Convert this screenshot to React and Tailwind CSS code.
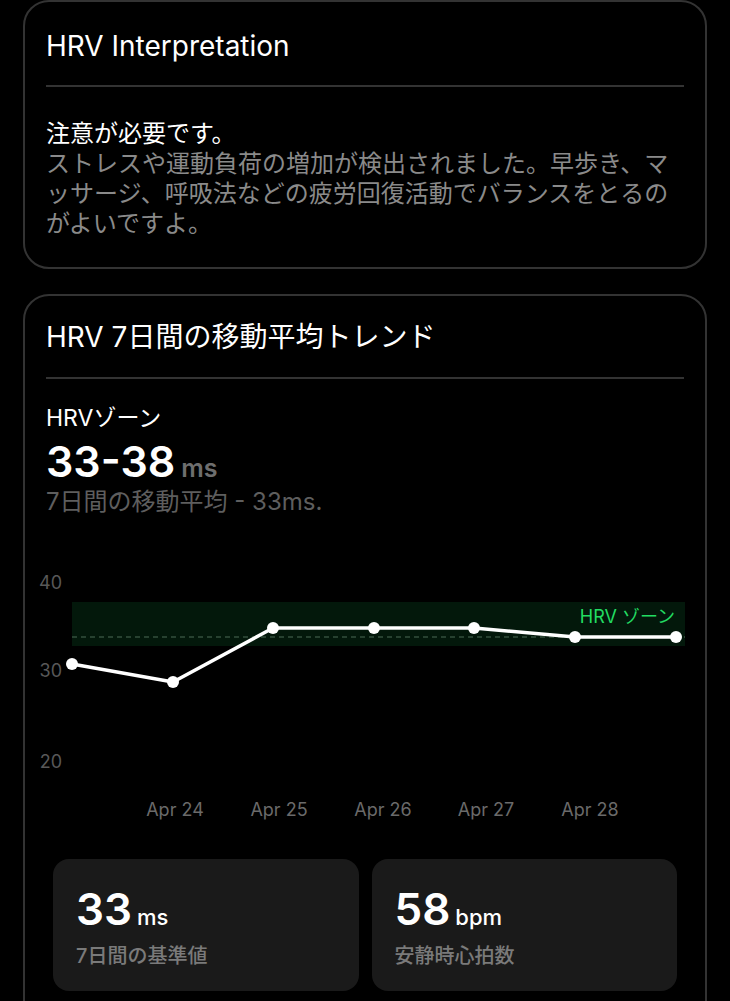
import React from 'react';

const font = { fontFamily: 'Inter, "Noto Sans CJK JP", sans-serif' };

const points = [
    [47, 104],
    [148, 122],
    [248, 68],
    [349, 68],
    [449, 68],
    [550, 77],
    [651, 77],
];

const xLabels = [
    ['Apr 24', 150],
    ['Apr 25', 254],
    ['Apr 26', 358],
    ['Apr 27', 461],
    ['Apr 28', 565],
];

function TrendChart() {
    const line = points.map((p, i) => (i === 0 ? 'M' : 'L') + p[0] + ' ' + p[1]).join(' ');
    return (
        <svg width="680" height="270" viewBox="0 0 680 270" className="block">
            <rect x="47" y="42" width="613" height="44" fill="#03180b" />
            <line x1="47" y1="77" x2="660" y2="77" stroke="#4d6b57" strokeWidth="1" strokeDasharray="5 4" />
            <text x="650" y="63" textAnchor="end" fill="#22dc62" fontSize="18" style={font}>HRV ゾーン</text>
            <text x="37" y="29" textAnchor="end" fill="#585858" fontSize="18" style={font}>40</text>
            <text x="37" y="117" textAnchor="end" fill="#585858" fontSize="18" style={font}>30</text>
            <text x="37" y="208" textAnchor="end" fill="#585858" fontSize="18" style={font}>20</text>
            {xLabels.map(([t, x]) => (
                <text key={t} x={x} y="256" textAnchor="middle" fill="#6a6a6a" fontSize="18" style={font}>{t}</text>
            ))}
            <path d={line} fill="none" stroke="#ffffff" strokeWidth="3.5" strokeLinejoin="round" strokeLinecap="round" />
            {points.map((p, i) => (
                <circle key={i} cx={p[0]} cy={p[1]} r="6" fill="#ffffff" />
            ))}
        </svg>
    );
}

function Stat({ value, unit, label }) {
    return (
        <div className="flex-1 rounded-[16px] bg-[#1a1a1a] pl-[23px] pt-[24px] pb-[22px]">
            <div className="flex items-baseline gap-[5px]">
                <span className="text-[44px] leading-[52px] font-semibold text-white">{value}</span>
                <span className="text-[22px] font-medium text-white">{unit}</span>
            </div>
            <div className="mt-[8px] text-[20px] leading-[26px] font-medium text-[#7a7a7a]">{label}</div>
        </div>
    );
}

export default function App() {
    return (
        <div className="min-h-screen bg-black text-white overflow-hidden" style={font}>
            <div className="mx-[23px] rounded-[26px] border-2 border-[#333333] px-[21px] pb-[28px]">
                <h2 className="pt-[27px] text-[28px] leading-[34px] font-normal text-white">HRV Interpretation</h2>
                <div className="mt-[22px] h-[2px] bg-[#333333]" />
                <p className="mt-[32px] text-[24px] leading-[30px] text-white">注意が必要です。</p>
                <p className="text-[24px] leading-[30px] text-[#8a8a8a]">
                    ストレスや運動負荷の増加が検出されました。早歩き、マッサージ、呼吸法などの疲労回復活動でバランスをとるのがよいですよ。
                </p>
            </div>

            <div className="mx-[23px] mt-[25px] rounded-[26px] border-2 border-[#333333] pb-[40px]">
                <div className="px-[21px]">
                    <h2 className="pt-[24px] text-[28px] leading-[34px] font-normal text-white">HRV 7日間の移動平均トレンド</h2>
                    <div className="mt-[23px] h-[2px] bg-[#333333]" />
                    <div className="mt-[25px] text-[23px] leading-[28px] text-white">HRVゾーン</div>
                    <div className="mt-[3px] flex items-baseline gap-[6px]">
                        <span className="text-[43px] leading-[52px] font-semibold text-white">33-38</span>
                        <span className="text-[25px] font-semibold text-[#6e6e6e]">ms</span>
                    </div>
                    <div className="text-[24px] leading-[28px] text-[#5e5e5e]">7日間の移動平均 - 33ms.</div>
                </div>
                <div className="mt-[44px]">
                    <TrendChart />
                </div>
                <div className="mt-[29px] flex gap-[13px] px-[28px]">
                    <Stat value="33" unit="ms" label="7日間の基準値" />
                    <Stat value="58" unit="bpm" label="安静時心拍数" />
                </div>
            </div>
        </div>
    );
}
